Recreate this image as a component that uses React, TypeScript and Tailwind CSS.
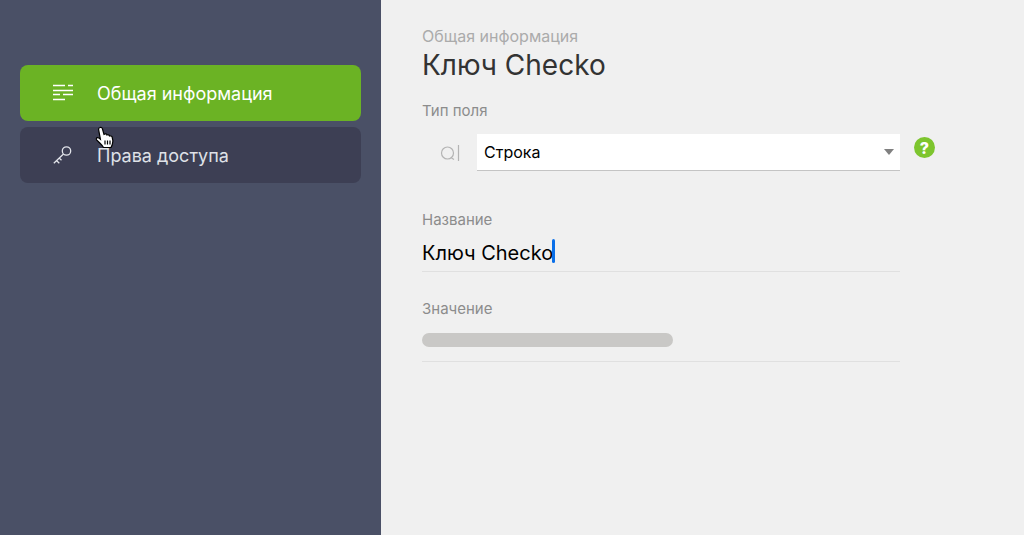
const LinesIcon = () => (
  <svg width="20" height="18" viewBox="0 0 20 18" fill="none" stroke="#ffffff" strokeWidth="1.3">
    <path d="M0 1.5H12M15 1.5H20M0 6.5H20M0 10.5H7M10 10.5H20M0 15.5H12" />
  </svg>
);

const KeyIcon = () => (
  <svg width="20" height="20" viewBox="0 0 20 20" fill="none" stroke="#e2e4ea" strokeWidth="1.3">
    <circle cx="13.5" cy="6" r="4.2" />
    <path d="M10.5 9L0.8 18.2M3.5 15.5L6.3 18.2M6.2 13L8.5 15.3" />
  </svg>
);

const HandCursor = () => (
  <svg
    className="absolute left-[95px] top-[126px]"
    width="22"
    height="24"
    viewBox="0 0 22 24"
  >
    <path
      d="M5 1.5C6 1 7 1.6 7.4 2.8L9 8.5L10 8C11 7.7 11.8 8 12 9C13 8.5 14.2 8.8 14.5 10C15.5 9.6 16.8 10 17.2 11.2C18 13.5 18 16 17.4 18C17 19.6 16.4 20.6 16 21.5H8.5C7.5 19.8 6.4 18.6 4.8 17L1.6 13.8C1 13 1.4 11.8 2.4 11.7C3.4 11.6 4.2 12.2 5.4 13.2L3.6 3.6C3.4 2.6 4 1.8 5 1.5Z"
      fill="#ffffff"
      stroke="#000000"
      strokeWidth="1.2"
    />
    <path d="M10 14.5V18.5M12.5 14.5V18.5M15 14.5V18.5" stroke="#000000" strokeWidth="1.2" />
  </svg>
);

const SearchType = () => (
  <svg width="20" height="18" viewBox="0 0 20 18" fill="none" stroke="#b4b4b4" strokeWidth="1.2">
    <circle cx="7.5" cy="9" r="6" />
    <path d="M11.5 14L14 15.5M18.5 1V17" />
  </svg>
);

export default function App() {
  return (
    <div className="flex h-[535px] w-[1024px] overflow-hidden bg-[#f0f0f0] font-['Inter','Liberation_Sans',sans-serif]">
      <aside className="relative flex w-[381px] shrink-0 flex-col gap-[6px] bg-[#4a5066] px-5 pt-[65px]">
        <div className="flex h-14 w-[341px] items-center rounded-lg bg-[#6bb324] pl-[33px] text-white">
          <LinesIcon />
          <span className="ml-[24px] text-[18px]">Общая информация</span>
        </div>
        <div className="flex h-14 w-[341px] items-center rounded-lg bg-[#3d3f54] pl-[33px] text-[#dfe1e7]">
          <KeyIcon />
          <span className="ml-[24px] text-[18px]">Права доступа</span>
        </div>
        <HandCursor />
      </aside>

      <main className="flex-1 pl-[41px] pt-[26px]">
        <div className="text-[16px] leading-5 text-[#ababab]">Общая информация</div>
        <h1 className="mt-[1px] text-[28px] leading-9 font-normal text-[#333333]">Ключ Checko</h1>

        <div className="mt-[18px] text-[15px] leading-5 text-[#8c8c8c]">Тип поля</div>
        <div className="mt-[13px] flex w-[517px] items-start">
          <div className="flex h-[37px] w-[55px] items-center pl-[18px]">
            <SearchType />
          </div>
          <div className="flex h-[37px] w-[423px] items-center justify-between border-b border-[#c4c4c4] bg-white pl-[7px] pr-[6px] text-[16px] text-black">
            <span>Строка</span>
            <span className="h-0 w-0 border-x-[5px] border-t-[6px] border-x-transparent border-t-[#808080]" />
          </div>
          <div className="ml-[14px] mt-[3px] flex h-[21px] w-[21px] shrink-0 items-center justify-center rounded-full bg-[#7dc52e] text-[16px] leading-none font-extrabold text-white">
            ?
          </div>
        </div>

        <div className="mt-[39px] text-[15px] leading-5 text-[#8c8c8c]">Название</div>
        <div className="mt-[9px] flex h-[33px] w-[478px] items-start border-b border-[#e0e0e0] text-[20px] leading-7 text-black">
          <span>Ключ Checko</span>
          <span className="ml-[-1px] h-6 w-[3px] rounded-sm bg-[#0a6fe8]" />
        </div>

        <div className="mt-[27px] text-[15px] leading-5 text-[#8c8c8c]">Значение</div>
        <div className="mt-[14px] w-[478px] border-b border-[#e0e0e0] pb-[14px]">
          <div className="h-[14px] w-[251px] rounded-full bg-[#c9c8c6]" />
        </div>
      </main>
    </div>
  );
}
